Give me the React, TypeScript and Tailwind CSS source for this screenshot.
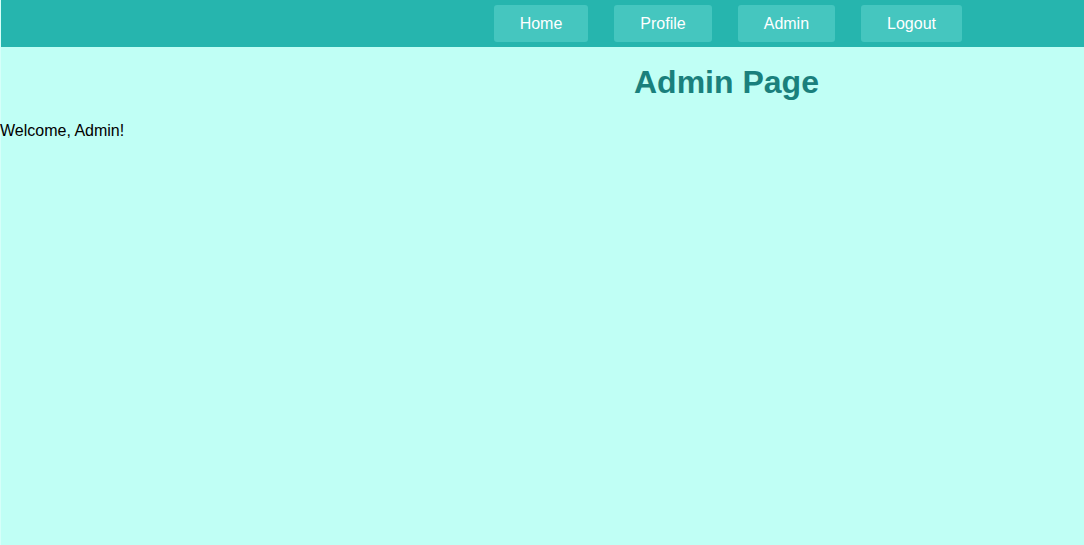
export default function App() {
  const links = ["Home", "Profile", "Admin", "Logout"];

  return (
    <div className="min-h-[545px] bg-[#c0fff5] font-['Liberation_Sans',Arial,sans-serif] text-black border-l border-[#d6fff9]">
      <nav className="h-[47px] bg-[#26b5ae] flex items-center justify-end pr-[122px] gap-[26px]">
        {links.map((label) => (
          <button
            key={label}
            type="button"
            className="h-[37px] px-[26px] rounded-[3px] bg-[#45c6bf] text-white text-base leading-none"
          >
            {label}
          </button>
        ))}
      </nav>

      <h1 className="mt-[17px] pl-[633px] text-[32px] leading-[37px] font-bold text-[#1a807c]">
        Admin Page
      </h1>

      <p className="mt-[21px] -ml-px text-base leading-[18px]">Welcome, Admin!</p>
    </div>
  );
}
